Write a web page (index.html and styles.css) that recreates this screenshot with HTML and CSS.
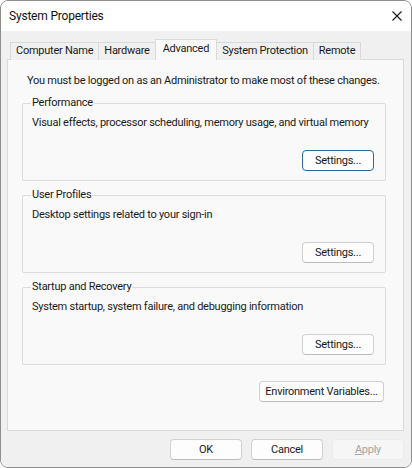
FILE: index.html
```html
<!DOCTYPE html>
<html lang="en">
<head>
<meta charset="utf-8">
<title>System Properties</title>
<link rel="stylesheet" href="styles.css">
</head>
<body>
<div class="window">
  <div class="titlebar">
    <span class="title">System Properties</span>
    <span class="close" aria-label="Close">
      <svg width="10" height="10" viewBox="0 0 10 10"><path d="M0.5 0.5 L9.5 9.5 M9.5 0.5 L0.5 9.5" stroke="#1a1a1a" stroke-width="1.1" fill="none"/></svg>
    </span>
  </div>
  <div class="body">
    <div class="tabs">
      <div class="tab">Computer Name</div>
      <div class="tab">Hardware</div>
      <div class="tab active">Advanced</div>
      <div class="tab">System Protection</div>
      <div class="tab">Remote</div>
    </div>
    <div class="panel">
      <p class="intro">You must be logged on as an Administrator to make most of these changes.</p>
      <fieldset class="group">
        <legend>Performance</legend>
        <p class="desc">Visual effects, processor scheduling, memory usage, and virtual memory</p>
        <div class="actions"><button class="btn default">Settings...</button></div>
      </fieldset>
      <fieldset class="group">
        <legend>User Profiles</legend>
        <p class="desc">Desktop settings related to your sign-in</p>
        <div class="actions"><button class="btn">Settings...</button></div>
      </fieldset>
      <fieldset class="group">
        <legend>Startup and Recovery</legend>
        <p class="desc">System startup, system failure, and debugging information</p>
        <div class="actions"><button class="btn">Settings...</button></div>
      </fieldset>
      <div class="env-row"><button class="btn wide">Environment Variables...</button></div>
    </div>
    <div class="footer">
      <button class="btn">OK</button>
      <button class="btn">Cancel</button>
      <button class="btn disabled" disabled><u>A</u>pply</button>
    </div>
  </div>
</div>
</body>
</html>
```
FILE: styles.css
```css
* { box-sizing: border-box; }
html, body { margin: 0; padding: 0; background: #ffffff; }
body {
  font-family: Roboto, "Noto Sans", sans-serif;
  font-size: 11px;
  letter-spacing: -0.25px;
  color: #1a1a1a;
}
.window {
  width: 412px;
  height: 468px;
  border: 1px solid #8e8e8e;
  border-radius: 8px;
  overflow: hidden;
  background: #f0f0f0;
  display: flex;
  flex-direction: column;
}
.titlebar {
  height: 30px;
  flex: none;
  background: #ffffff;
  display: flex;
  align-items: center;
  justify-content: space-between;
  padding: 0 9px 0 8px;
}
.title { font-size: 12px; line-height: 16px; color: #111; letter-spacing: -0.2px; }
.close { display: flex; width: 10px; height: 10px; margin-top: -1px; }
.body {
  flex: 1;
  display: flex;
  flex-direction: column;
  padding: 8px 7px 0 6px;
  background: #f0f0f0;
}
.tabs {
  display: flex;
  align-items: flex-end;
  padding-left: 3px;
  height: 21px;
  position: relative;
  z-index: 1;
  margin-bottom: -1px;
}
.tab {
  height: 18px;
  padding: 0 5px;
  line-height: 16px;
  border: 1px solid #d9d9d9;
  border-bottom: none;
  background: #f0f0f0;
  margin-left: -1px;
  white-space: nowrap;
}
.tab:first-child { margin-left: 0; }
.tab.active {
  height: 21px;
  background: #f9f9f9;
  line-height: 17px;
  padding: 0 7px;
}
.panel {
  height: 372px;
  flex: none;
  border: 1px solid #d9d9d9;
  background: #f9f9f9;
  padding: 13px 17px 0 14px;
}
p { margin: 0; }
.intro { line-height: 16px; padding-left: 5px; white-space: nowrap; }
.group {
  margin: 6px 0 0 0;
  padding: 0 11px 9px 9px;
  border: 1px solid #dcdcdc;
  border-radius: 2px;
  min-width: 0;
}
.group legend {
  padding: 0 1px;
  margin-left: -1px;
  line-height: 16px;
}
.desc { line-height: 16px; margin-top: 4px; white-space: nowrap; }
.actions { display: flex; justify-content: flex-end; margin-top: 19px; }
.btn {
  font: inherit;
  letter-spacing: inherit;
  color: #1a1a1a;
  width: 72px;
  height: 21px;
  padding: 0;
  background: #fdfdfd;
  border: 1px solid #d0d0d0;
  border-bottom-color: #bcbcbc;
  border-radius: 4px;
  line-height: 18px;
}
.btn.default {
  border: 1px solid #2a6a93;
}
.btn.wide { width: 125px; }
.env-row { display: flex; justify-content: flex-end; padding-right: 2px; margin-top: 16px; }
.footer {
  display: flex;
  justify-content: flex-end;
  gap: 9px;
  padding-top: 8px;
}
.btn.disabled {
  background: #f6f6f6;
  border-color: #ebebeb;
  color: #a3a3a3;
}
.btn.disabled u { text-decoration-thickness: 1px; }
```
